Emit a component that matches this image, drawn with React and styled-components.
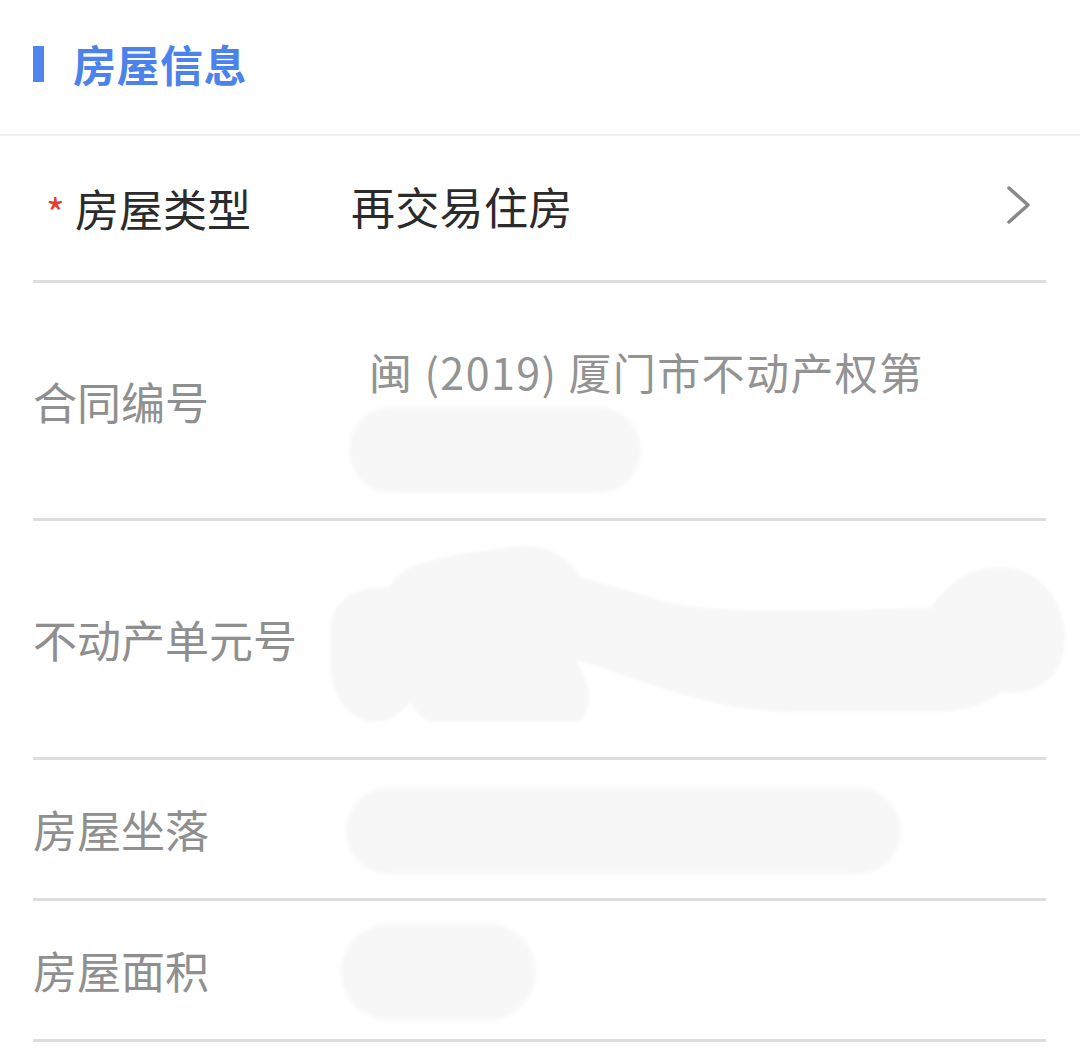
import React from "react";
import styled, { createGlobalStyle } from "styled-components";

const Global = createGlobalStyle`
  html, body { margin: 0; padding: 0; background: #ffffff; }
  body { font-family: "Noto Sans CJK SC", "Noto Sans", sans-serif; }
`;

const Page = styled.div`
  width: 1080px;
  background: #ffffff;
`;

const Header = styled.div`
  display: flex;
  align-items: center;
  gap: 29px;
  height: 136px;
  padding-left: 33px;
  padding-bottom: 8px;
  border-bottom: 2px solid #efeff2;
  box-sizing: border-box;
`;

const Bar = styled.span`
  width: 11px;
  height: 36px;
  background: #4f86ee;
  margin-top: 1px;
`;

const Title = styled.h2`
  margin: 0;
  font-size: 43px;
  font-weight: 700;
  color: #4b82ec;
  line-height: 1;
  letter-spacing: 0.5px;
`;

const List = styled.div`
  padding: 0 34px 0 33px;
`;

const Row = styled.div`
  display: flex;
  align-items: ${(p) => (p.$top ? "flex-start" : "center")};
  height: ${(p) => p.$h}px;
  border-bottom: 3px solid #dddddf;
  box-sizing: border-box;
`;

const Label = styled.div`
  width: ${(p) => p.$w || 318}px;
  flex-shrink: 0;
  box-sizing: border-box;
  display: flex;
  align-items: center;
  align-self: center;
  font-size: 44px;
  line-height: 60px;
  color: ${(p) => (p.$dark ? "#2b2b2b" : "#8f8f8f")};
  padding-left: ${(p) => (p.$req ? 13 : 0)}px;
`;

const Star = styled.span`
  color: #e0402e;
  font-size: 40px;
  width: 29px;
  margin-top: 8px;
`;

const Value = styled.div`
  flex: 1;
  font-size: 44px;
  line-height: 60px;
  color: #2b2b2b;
  margin-top: -4px;
  letter-spacing: 0.3px;
`;

const GrayValue = styled.div`
  flex: 1;
  padding-top: 51px;
  padding-left: 18px;
  font-size: 43px;
  line-height: 75px;
  color: #939393;
  letter-spacing: 1.4px;
  white-space: nowrap;
`;

const Blob = styled.div`
  width: ${(p) => p.$w}px;
  height: ${(p) => p.$h}px;
  margin-left: ${(p) => p.$ml || 0}px;
  margin-top: ${(p) => p.$mt || 0}px;
  background: #f8f7f8;
  border-radius: ${(p) => p.$r || 40}px;
  filter: blur(2px);
`;

const Chevron = styled.svg`
  width: 26px;
  height: 40px;
  margin-left: auto;
  margin-right: 14px;
  margin-top: -6px;
`;

const Smudge = styled.svg`
  display: block;
  flex-shrink: 0;
  margin-left: 15px;
  margin-top: -14px;
  filter: blur(1.5px);
`;

export default function App() {
  return (
    <Page>
      <Global />
      <Header>
        <Bar />
        <Title>房屋信息</Title>
      </Header>
      <List>
        <Row $h={147}>
          <Label $dark $req>
            <Star>*</Star>房屋类型
          </Label>
          <Value>再交易住房</Value>
          <Chevron viewBox="0 0 26 40">
            <path d="M3 3 L22 20 L3 37" fill="none" stroke="#888888" strokeWidth="3.5" strokeLinecap="round" strokeLinejoin="round" />
          </Chevron>
        </Row>
        <Row $h={238} $top>
          <Label>合同编号</Label>
          <GrayValue>
            闽 (2019) 厦门市不动产权第
            <Blob $w={292} $h={86} $ml={-20} $mt={-2} $r={43} />
          </GrayValue>
        </Row>
        <Row $h={239}>
          <Label $w={282}>不动产单元号</Label>
          <Smudge width="740" height="180" viewBox="0 0 740 180">
            <path
              d="M60 45 C70 25 90 20 130 12 L180 5 C210 0 235 10 250 35 L320 55 C360 70 420 68 500 68 L600 66 C620 40 640 25 670 25 C710 25 735 60 735 95 C735 140 700 155 670 150 C655 165 630 170 600 170 L460 170 C400 170 340 150 270 125 L245 118 C260 140 265 160 250 180 L110 185 C95 180 85 170 80 160 C70 175 55 180 40 180 C15 175 0 150 0 120 L0 90 C0 60 20 45 60 45 Z"
              fill="#f8f7f8"
            />
          </Smudge>
        </Row>
        <Row $h={141}>
          <Label>房屋坐落</Label>
          <Blob $w={555} $h={86} $ml={-5} $mt={4} $r={43} />
        </Row>
        <Row $h={141}>
          <Label>房屋面积</Label>
          <Blob $w={195} $h={96} $ml={-10} $mt={4} $r={48} />
        </Row>
      </List>
    </Page>
  );
}
